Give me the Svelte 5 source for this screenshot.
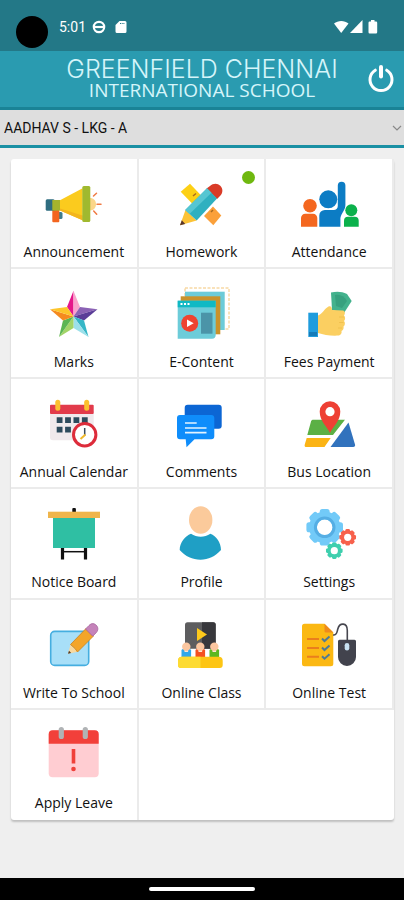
<script>
  // Kacheln im Hauptmenü, Reihenfolge = Anzeige
  const tiles = [
    { id: "announcement", label: "Announcement" },
    { id: "homework", label: "Homework", isNew: true },
    { id: "attendance", label: "Attendance" },
    { id: "marks", label: "Marks" },
    { id: "content", label: "E-Content" },
    { id: "fees", label: "Fees Payment" },
    { id: "calendar", label: "Annual Calendar" },
    { id: "comments", label: "Comments" },
    { id: "bus", label: "Bus Location" },
    { id: "notice", label: "Notice Board" },
    { id: "profile", label: "Profile" },
    { id: "settings", label: "Settings" },
    { id: "write", label: "Write To School" },
    { id: "class", label: "Online Class" },
    { id: "test", label: "Online Test" },
    { id: "leave", label: "Apply Leave" },
  ];

  const students = ["AADHAV S - LKG - A"];
  let student = $state(students[0]);
</script>

{#snippet gear(cx, cy, r, hole, color)}
  <g transform={`translate(${cx} ${cy})`} fill={color}>
    {#each [0, 45, 90, 135] as angle}
      <rect x={-r * 0.27} y={-r} width={r * 0.54} height={r * 2} rx={r * 0.14} transform={`rotate(${angle})`} />
    {/each}
    <circle r={r * 0.86} />
    <circle r={hole} fill="#fff" />
  </g>
{/snippet}

{#snippet icon(id)}
  <svg class="icon" viewBox="0 0 64 64" aria-hidden="true">
    {#if id === "announcement"}
      <rect x="16" y="39" width="4.5" height="7" rx="1.5" fill="#3e7c8c" />
      <path d="M10.3 37h7v11.3a1 1 0 0 1-1 1h-5a1 1 0 0 1-1-1z" fill="#f3651f" />
      <rect x="3.7" y="26.3" width="9" height="11.5" rx="1.5" fill="#2f6d80" />
      <rect x="10.3" y="27" width="8" height="10.6" fill="#a5b42c" />
      <path d="M18 27.3l22.6-12v32L18 37.5z" fill="#fbcb1e" />
      <path d="M18 35.5l22.6 7v4.8L18 37.5z" fill="#f3b51d" />
      <path d="M48 25c3.5 0 6 2.5 6 6.2s-2.5 6.2-6 6.2z" fill="#fbd68a" />
      <rect x="40.3" y="13" width="8" height="36" rx="1.5" fill="#a0b92f" />
      <path d="M51.5 23l3-2.8M55 31.2h4M51.7 38l3 3.3" stroke="#f07b45" stroke-width="1.5" stroke-linecap="round" />
    {:else if id === "homework"}
      <path d="M11.7 18.7l9.3-8L36 26.5l-9 8z" fill="#fdd015" />
      <path d="M35 43l9-9.5 8.3 9-8 9.8z" fill="#fba03a" />
      <path d="M24 23l3-2.5M44 37l-2 2" stroke="#a86a20" stroke-width="1.5" />
      <path d="M16.5 37L11 52.3 27.7 47.5z" fill="#fcc337" />
      <path d="M12.8 47.3L11 52.3l5.2-1.4z" fill="#59352c" />
      <path d="M41 13c3-3 7.5-3.2 10.3-.3 3 3 2.7 7.5-.3 10.3l-3 3L37.5 15.5z" fill="#d93b27" />
      <path d="M38 15.2l10 10.2L27.7 47.5 16.2 37z" fill="#2fb0c0" />
      <path d="M38 15.2l4.5 4.6L20.5 41l-4.3-4z" fill="#55c6d2" />
    {:else if id === "attendance"}
      <circle cx="13" cy="32.7" r="6.8" fill="#f4671f" />
      <path d="M4 53.7V45a4.3 4.3 0 0 1 4.3-4.3H16a4.3 4.3 0 0 1 4.3 4.3v8.7z" fill="#f4671f" />
      <circle cx="31.3" cy="26.3" r="9" fill="#0c7cc4" />
      <path d="M22.3 53.7V42.5a5.5 5.5 0 0 1 5.5-5.5h9c2 0 4-1.5 4-4V12.5a3.8 3.8 0 0 1 7.6 0V32c0 5-4 8-5 13v8.7z" fill="#0c7cc4" />
      <circle cx="54.3" cy="37.3" r="6" fill="#0bb14b" />
      <path d="M47 53.7v-6a4 4 0 0 1 4-4h6.7a4 4 0 0 1 4 4v6z" fill="#0bb14b" />
    {:else if id === "marks"}
      <path d="M31.5 7.7L25 24l6.5 9.5z" fill="#e5178a" />
      <path d="M31.5 7.7L38 24l-6.5 9.5z" fill="#f9a3cb" />
      <path d="M55.5 26.3L38 24l-6.5 9.5z" fill="#8b62b5" />
      <path d="M55.5 26.3L42 37.5l-10.5-4z" fill="#5b3d98" />
      <path d="M46.5 54L42 37.5l-10.5-4z" fill="#35b6c6" />
      <path d="M46.5 54l-15-9V33.5z" fill="#9ce0ea" />
      <path d="M17 54l14.5-9V33.5z" fill="#a2d468" />
      <path d="M17 54l4-16.5 10.5-4z" fill="#5cb553" />
      <path d="M8 26.3l13 11.2 10.5-4z" fill="#f58a1f" />
      <path d="M8 26.3L25 24l6.5 9.5z" fill="#fdc52b" />
    {:else if id === "content"}
      <rect x="16" y="5" width="44" height="41" fill="none" stroke="#f8d9a5" stroke-width="1.5" stroke-dasharray="3 1.5" />
      <rect x="16" y="8.7" width="39.7" height="38.3" fill="#6ccbd8" />
      <rect x="11.7" y="13.3" width="39.6" height="38" fill="#c9922b" />
      <path d="M8.7 17.7h38V52a3.7 3.7 0 0 1-3.7 3.7H8.7z" fill="#6dccd9" />
      <rect x="8.7" y="17.7" width="38" height="6.6" fill="#0fb9c4" />
      <path d="M11.5 21h9.5" stroke="#fff" stroke-width="2" stroke-dasharray="2 1.5" />
      <circle cx="20.7" cy="40.3" r="8.5" fill="#ee4430" />
      <path d="M18 36.5l6.7 3.8-6.7 3.8z" fill="#fff" />
      <rect x="32" y="29.7" width="11.5" height="21" fill="#4b94a8" />
    {:else if id === "fees"}
      <path d="M34 9.5c6-1.5 11-1 16 1.5l4.7 7L47 30l-12-3z" fill="#43b28d" />
      <path d="M38 12c5-1 9 1 12 6l-5 7-6-2z" fill="#37a17f" />
      <path d="M21 32.5c4.5-1.5 6.5-7 10.5-9 2-.8 3.5 0 3.5 3.5l11 .5c2 .5 2.5 3 1 5 1.5 1.5 1.5 4 0 5.5 1.5 1.5 1 4.500-.5 5.500.5 2-.5 4-2 4.500.5 2-.5 4-2.500 4.500-8 .5-15-.5-21-2.500z" fill="#fbcf61" />
      <path d="M42 34h5M42 39.5h4.5M41 45h4" stroke="#efbe4a" stroke-width=".8" />
      <rect x="11.3" y="29.7" width="9.7" height="24.3" fill="#1f9cdd" />
      <path d="M12 49h8v4h-8z" fill="#167bb8" />
    {:else if id === "calendar"}
      <path d="M8 18h43.7v29.3H11a3 3 0 0 1-3-3z" fill="#f0e9ec" />
      <rect x="8" y="11.7" width="43.7" height="9.3" rx="1" fill="#e23b4b" />
      <rect x="13.3" y="6.7" width="5" height="11" rx="2.5" fill="#fcc02e" />
      <rect x="42.2" y="6.7" width="5" height="11" rx="2.5" fill="#fcc02e" />
      <path d="M14.7 27.2h31" stroke="#2d4a5c" stroke-width="5.8" stroke-dasharray="5.8 2.6" />
      <path d="M14.7 36.7h14.3" stroke="#2d4a5c" stroke-width="5.8" stroke-dasharray="5.8 2.6" />
      <circle cx="42.7" cy="41.7" r="11.2" fill="#fff" stroke="#dd2c3b" stroke-width="3" />
      <path d="M42.7 35v7.5" stroke="#3a4a5c" stroke-width="1.5" />
      <path d="M43.5 41.5L38.5 46" stroke="#f0b92c" stroke-width="2" />
    {:else if id === "comments"}
      <rect x="15.7" y="11.7" width="37" height="24" rx="3" fill="#0c66d4" />
      <path d="M11 22h31.3a3 3 0 0 1 3 3v18.3a3 3 0 0 1-3 3H25.5l-8 8-.8-8H11a3 3 0 0 1-3-3V25a3 3 0 0 1 3-3z" fill="#0f8dfb" />
      <path d="M16 30h11.7M16 35h21.5M16 39.7h21.5" stroke="#e4f4ff" stroke-width="1.7" />
    {:else if id === "bus"}
      <path d="M16.5 26.7H48L36 42H10.3l3.7-13.5c.3-1.2 1-1.8 2.5-1.8z" fill="#5bb045" />
      <path d="M9.7 45h24l-6.2 9H9.5c-1.5 0-2.2-.8-1.8-2.3z" fill="#fbb415" />
      <path d="M51.5 29.5L58 51.5c.4 1.5-.3 2.5-1.8 2.5H33.5z" fill="#3172bd" />
      <path d="M49.5 27L29 54" stroke="#fff" stroke-width="2" />
      <path d="M33 40c-3-6.5-10.3-12-10.3-21.5a10.3 10.3 0 0 1 20.6 0C43.3 28 36 33.5 33 40z" fill="#ee4034" />
      <circle cx="33" cy="18.7" r="4.6" fill="#fff" />
    {:else if id === "notice"}
      <rect x="30.3" y="5" width="3.6" height="5" rx="1" fill="#111" />
      <path d="M20.5 44v12.5M43.5 44v12.5" stroke="#111" stroke-width="3.2" />
      <path d="M20.5 48.7h23" stroke="#111" stroke-width="1.5" />
      <rect x="11" y="14" width="42" height="31" fill="#2fbfa3" />
      <rect x="6" y="8.7" width="52" height="6.3" fill="#efb54b" />
    {:else if id === "profile"}
      <ellipse cx="31.7" cy="17" rx="11.7" ry="13.7" fill="#fbca9b" />
      <path d="M22 30.7c6 4 13.4 4 19.4 0 6 2.3 10.6 9 10.6 16.3C46 53.5 39.5 56.7 31.5 56.7S16.5 53.5 10.7 47c0-7.3 5.3-14 11.3-16.3z" fill="#1f9fc5" />
    {:else if id === "settings"}
      {@render gear(27.7, 24.3, 18.3, 8, "#72caf8")}
      <circle cx="27.7" cy="24.3" r="9.3" fill="none" stroke="#55aee4" stroke-width="3" />
      {@render gear(50.7, 34.3, 8.3, 3.6, "#f7614c")}
      {@render gear(37.3, 47.7, 8.3, 3.6, "#3fcfae")}
    {:else if id === "write"}
      <rect x="8.7" y="17.4" width="38" height="34" rx="4" fill="#a8dff8" stroke="#45aee0" stroke-width="1.6" />
      <path d="M28.5 30.5L26 39.7l10-2z" fill="#f8d9a0" />
      <path d="M27 36.7l-1 3 3.2-.8z" fill="#4b3a2a" />
      <path d="M44 14.5l7.5 7.5L35.5 38 33 34.5l-4.5-4z" fill="#f3a529" stroke="#c9821e" stroke-width=".8" />
      <path d="M43.5 15l3.5-3.5c2.5-2.5 5-2.4 7.2-.3 2.2 2.2 2.2 5 0 7.5l-3.5 3.5z" fill="#c583ba" stroke="#a3619a" stroke-width=".8" />
    {:else if id === "class"}
      <rect x="16" y="8.3" width="30.7" height="26.5" rx="2.5" fill="#5d5d5f" />
      <path d="M33 8.3h11.2a2.5 2.5 0 0 1 2.5 2.5v24H33z" fill="#38383c" />
      <path d="M28 14l10 6.5L28 27z" fill="#fdc91b" />
      <rect x="12.5" y="35" width="9.6" height="9" rx="1.5" fill="#30a8ea" />
      <rect x="26.5" y="35" width="9.6" height="9" rx="1.5" fill="#f5511f" />
      <rect x="40.5" y="35" width="9.6" height="9" rx="1.5" fill="#5bb820" />
      <path d="M15.5 35h3.6v3h-3.6zM29.5 35h3.6v3h-3.6zM43.5 35h3.6v3h-3.6z" fill="#fde6d4" />
      <circle cx="17.3" cy="32.7" r="4.2" fill="#fbc6a0" />
      <circle cx="31.3" cy="32.7" r="4.2" fill="#fbc6a0" />
      <circle cx="45.3" cy="32.7" r="4.2" fill="#fbc6a0" />
      <path d="M13 42.7h36.7a4 4 0 0 1 4 4V51a3 3 0 0 1-3 3H12a3 3 0 0 1-3-3v-4.3a4 4 0 0 1 4-4z" fill="#fdc513" />
      <path d="M13 42.7h18.5V54H12a3 3 0 0 1-3-3v-4.3a4 4 0 0 1 4-4z" fill="#fddb33" />
    {:else if id === "test"}
      <path d="M7.5 9.7h20l8.8 8.8v31.3a2.5 2.5 0 0 1-2.5 2.5H7.5A2.5 2.5 0 0 1 5 49.8V12.2a2.5 2.5 0 0 1 2.5-2.5z" fill="#fbb813" />
      <path d="M27.5 9.7l8.8 8.8H29a1.5 1.5 0 0 1-1.5-1.5z" fill="#ee8a1c" />
      <path d="M10 25h12M10 34h12M10 42.7h12" stroke="#ea7e1c" stroke-width="2" />
      <path d="M25 24.5l2.5 2.5 5-4.5M25 33.5l2.5 2.5 5-4.5M25 42.2l2.5 2.5 5-4.5" fill="none" stroke="#4f7a94" stroke-width="2" />
      <path d="M36 21c4 .5 4-3 4.8-6 1.7-6.5 9.5-7 9.5 1.5v9.5" fill="none" stroke="#46464f" stroke-width="1.6" />
      <path d="M42.5 25.7h15a1.5 1.5 0 0 1 1.5 1.5V43a9 9 0 0 1-18 0V27.2a1.5 1.5 0 0 1 1.5-1.5z" fill="#42434d" />
      <rect x="47.7" y="29" width="4.6" height="7.5" rx="2.3" fill="#c8e2f2" />
    {:else if id === "leave"}
      <rect x="6.7" y="6.3" width="50" height="47" rx="4" fill="#ffcdd2" />
      <path d="M10.7 6.3h42a4 4 0 0 1 4 4v9.4h-50v-9.4a4 4 0 0 1 4-4z" fill="#f2403a" />
      <rect x="16.7" y="3" width="5.2" height="12" rx="2.6" fill="#b0b3b5" />
      <rect x="40.7" y="3" width="5.2" height="12" rx="2.6" fill="#b0b3b5" />
      <rect x="29.7" y="25" width="3.6" height="14.5" fill="#f0403a" />
      <circle cx="31.5" cy="45" r="2.3" fill="#f0403a" />
    {/if}
  </svg>
{/snippet}

<div class="app">
  <div class="status-bar">
    <span class="camera"></span>
    <span class="time">5:01</span>
    <svg class="status-icon" viewBox="0 0 14 14" aria-hidden="true">
      <circle cx="7" cy="7" r="5.2" fill="none" stroke="#fff" stroke-width="2.2" />
      <path d="M1 7h12" stroke="#fff" stroke-width="2.2" />
    </svg>
    <svg class="status-icon" viewBox="0 0 14 14" aria-hidden="true">
      <path d="M5.5 1H11a1.5 1.5 0 0 1 1.5 1.5v9A1.5 1.5 0 0 1 11 13H3a1.5 1.5 0 0 1-1.5-1.5V5z" fill="#fff" />
      <path d="M6 3.5h4.5" stroke="#237887" stroke-width="1" stroke-dasharray="1 .7" />
    </svg>
    <svg class="signal" viewBox="0 0 46 14" aria-hidden="true">
      <path d="M1 3.5C5 0 11.5 0 15.5 3.5L8.2 13z" fill="#fff" />
      <path d="M17 13L29.5 0v13z" fill="#fff" />
      <path d="M38 0h3.5v1.5H43a1.2 1.2 0 0 1 1.2 1.2v9.6A1.2 1.2 0 0 1 43 13.5h-6.3a1.2 1.2 0 0 1-1.2-1.2V2.7a1.2 1.2 0 0 1 1.2-1.2H38z" fill="#fff" />
    </svg>
  </div>

  <header class="header">
    <h1 class="school">
      <span class="school-name">GREENFIELD CHENNAI</span>
      <span class="school-sub">INTERNATIONAL SCHOOL</span>
    </h1>
    <button class="logout" type="button" aria-label="Logout">
      <svg viewBox="0 0 28 28" aria-hidden="true">
        <path d="M8.3 5.2a11 11 0 1 0 11.4 0" fill="none" stroke="#fff" stroke-width="3" stroke-linecap="round" />
        <path d="M14 2v9.5" stroke="#fff" stroke-width="4" stroke-linecap="round" />
      </svg>
    </button>
  </header>

  <div class="student-bar">
    <select class="student" aria-label="Student" bind:value={student}>
      {#each students as name}
        <option>{name}</option>
      {/each}
    </select>
    <svg class="chevron" viewBox="0 0 10 6" aria-hidden="true">
      <path d="M1 1l4 4 4-4" fill="none" stroke="#888" stroke-width="1.2" />
    </svg>
  </div>

  <main class="content">
    <nav class="grid">
      {#each tiles as tile}
        <a class="tile" href={`#${tile.id}`}>
          {@render icon(tile.id)}
          <span class="label">{tile.label}</span>
          {#if tile.isNew}
            <span class="badge"></span>
          {/if}
        </a>
      {/each}
    </nav>
  </main>

  <footer class="nav-bar"><span class="pill"></span></footer>
</div>

<style>
  :global(body) {
    margin: 0;
  }
  .app {
    min-height: 100vh;
    display: flex;
    flex-direction: column;
    background: #efefef;
    font-family: "Open Sans", sans-serif;
  }

  /* Statusleiste */
  .status-bar {
    height: 51px;
    box-sizing: border-box;
    padding: 2px 25px 0 16px;
    display: flex;
    align-items: center;
    background: #237887;
    color: #fff;
  }
  .camera {
    width: 32px;
    height: 32px;
    margin: 10px 11px 0 0;
    border-radius: 50%;
    background: #000;
  }
  .time {
    margin-right: 6px;
    font: 400 14px Roboto, sans-serif;
  }
  .status-icon {
    width: 14px;
    height: 14px;
    margin-right: 8px;
  }
  .signal {
    width: 46px;
    height: 14px;
    margin-left: auto;
  }

  /* Kopfzeile */
  .header {
    height: 59px;
    box-sizing: border-box;
    border-bottom: 3px solid #1a8396;
    padding: 0 8px 0 38px;
    display: flex;
    align-items: center;
    background: #2a9bb0;
  }
  .school {
    flex: 1;
    margin: 0;
    display: flex;
    flex-direction: column;
    align-items: center;
    color: #d5f5fa;
    white-space: nowrap;
  }
  .school-name {
    font-family: Inter, sans-serif;
    font-size: 25px;
    line-height: 22px;
    font-weight: 300;
  }
  .school-sub {
    font-size: 19px;
    line-height: 20px;
    font-weight: 500;
  }
  .logout {
    width: 30px;
    height: 30px;
    padding: 1px;
    border: 0;
    background: none;
    cursor: pointer;
  }
  .logout svg {
    display: block;
    width: 28px;
    height: 28px;
  }

  /* Auswahl Schüler */
  .student-bar {
    height: 38px;
    box-sizing: border-box;
    border-bottom: 3px solid #1a90a4;
    padding-right: 2px;
    display: flex;
    align-items: center;
    background: #dedede;
  }
  .student {
    flex: 1;
    height: 100%;
    padding: 0 4px;
    border: 0;
    appearance: none;
    background: none;
    color: #111;
    font: 400 14px Roboto, sans-serif;
  }
  .chevron {
    width: 10px;
    height: 6px;
    pointer-events: none;
  }

  /* Kacheln */
  .content {
    flex: 1;
    padding: 11px 10px 58px 11px;
    display: flex;
  }
  .grid {
    flex: 1;
    display: grid;
    grid-template-columns: repeat(3, 1fr);
    grid-auto-rows: 1fr;
    background: #fff;
    border-radius: 3px;
    box-shadow: 0 2px 2px rgba(0, 0, 0, 0.2);
  }
  .tile {
    position: relative;
    padding: 14px 0 4px;
    border-right: 2px solid #ebebeb;
    border-bottom: 2px solid #ebebeb;
    display: flex;
    flex-direction: column;
    align-items: center;
    color: #111;
    text-decoration: none;
  }
  .tile:last-child {
    border-bottom: 0;
  }
  .icon {
    width: 64px;
    height: 64px;
  }
  .label {
    margin-top: 5px;
    font-size: 14px;
    line-height: 20px;
    white-space: nowrap;
  }
  .badge {
    position: absolute;
    top: 12px;
    right: 9px;
    width: 13px;
    height: 13px;
    border-radius: 50%;
    background: #6fb80f;
  }

  /* Systemnavigation */
  .nav-bar {
    height: 22px;
    display: flex;
    justify-content: center;
    align-items: center;
    background: #000;
  }
  .pill {
    width: 106px;
    height: 4px;
    border-radius: 2px;
    background: #fff;
  }
</style>
